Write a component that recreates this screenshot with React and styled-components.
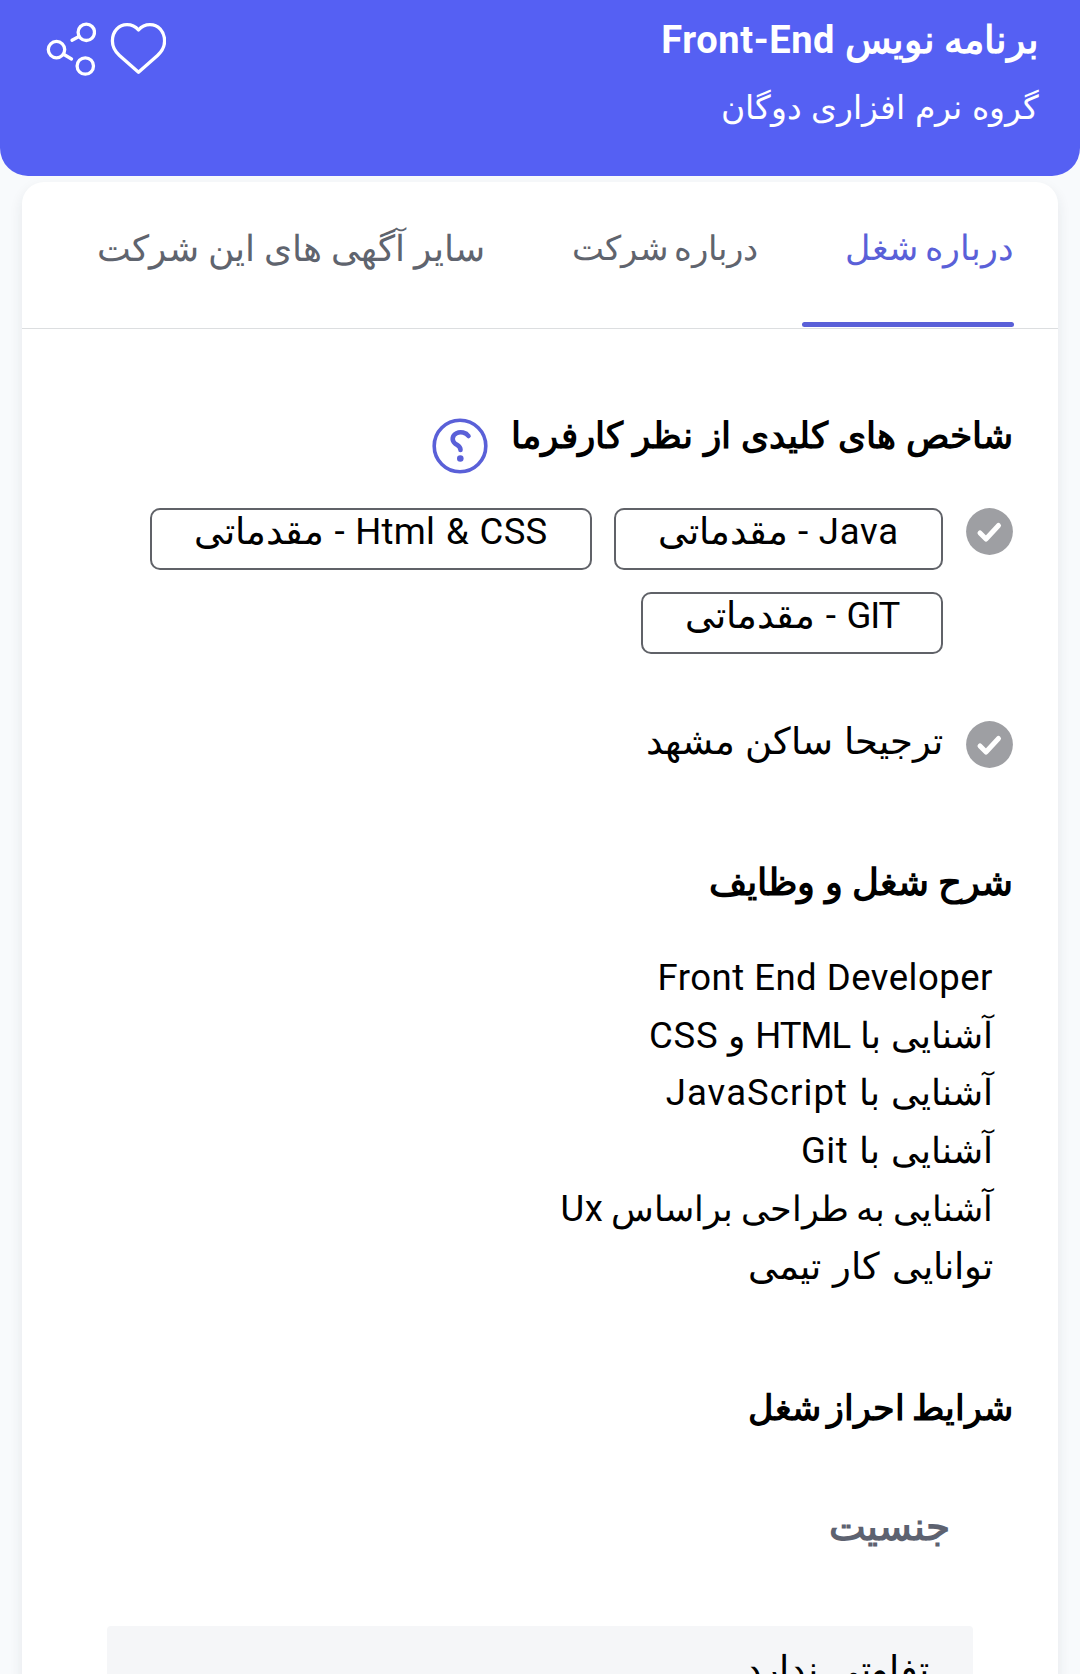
import styled, { createGlobalStyle } from "styled-components"

const GlobalStyle = createGlobalStyle`
  * {
    box-sizing: border-box;
    margin: 0;
    padding: 0;
  }
  body {
    background-color: #f8fafc;
    color: #000;
    font-family: Roboto, sans-serif;
    overflow: hidden;
  }
`

const Page = styled.main`
  direction: rtl;
  width: 1080px;
  height: 1674px;
  overflow: hidden;
`

const Header = styled.header`
  display: flex;
  justify-content: space-between;
  height: 176px;
  padding: 10px 41px 0 46px;
  border-radius: 0 0 28px 28px;
  background-color: #5560f3;
  color: #fff;
`

const HeaderTitles = styled.div`
  display: flex;
  flex-direction: column;
  gap: 8px;
`

const JobTitle = styled.h1`
  font-size: 38px;
  font-weight: 700;
  line-height: 60px;
`

const CompanyName = styled.p`
  font-size: 33px;
  line-height: 60px;
  word-spacing: 1.6px;
`

const HeaderActions = styled.div`
  display: flex;
  gap: 14px;
  padding-top: 11px;
`

const Card = styled.section`
  width: 1036px;
  height: 1600px;
  margin: 6px auto 0;
  border-radius: 22px;
  background-color: #fff;
  box-shadow: 0 6px 14px rgba(30, 40, 60, 0.09);
`

const Tabs = styled.nav`
  display: flex;
  gap: 44px;
  height: 147px;
  padding: 37px 44px 0 0;
  border-bottom: 1px solid #dcdee0;
`

const Tab = styled.a`
  display: flex;
  flex-direction: column;
  justify-content: space-between;
  padding-bottom: 1px;
  color: ${(props) => (props.$active ? "#5a60d8" : "#5f646e")};
  white-space: nowrap;
`

const TabLabel = styled.span`
  padding-left: ${(props) => (props.$space ? 43 : 41)}px;
  font-size: ${(props) => props.$size}px;
  line-height: 60px;
  word-spacing: ${(props) => props.$space || 0}px;
`

const TabIndicator = styled.span`
  height: 5px;
  border-radius: 3px;
  background-color: #5a60d8;
`

const Body = styled.div`
  display: flex;
  flex-direction: column;
  padding: 77px 45px 0 85px;
`

const HeadingRow = styled.div`
  display: flex;
  align-items: flex-start;
  gap: 23px;
  height: 68px;
`

const Heading = styled.h2`
  margin-top: ${(props) => props.$top || 0}px;
  font-size: ${(props) => props.$size}px;
  font-weight: 700;
  line-height: 60px;
  word-spacing: ${(props) => props.$space || 0}px;
`

const HelpButton = styled.span`
  display: flex;
  margin-top: 12px;
`

const Criteria = styled.ul`
  display: flex;
  flex-direction: column;
  gap: 67px;
  margin-top: 34px;
  list-style: none;
`

const Criterion = styled.li`
  display: flex;
  align-items: flex-start;
  gap: 23px;
  min-height: 47px;

  > svg {
    flex-shrink: 0;
  }
`

const CriterionText = styled.p`
  font-size: 37px;
  line-height: 41px;
  word-spacing: 1.5px;
`

const Chips = styled.div`
  display: flex;
  flex-wrap: wrap;
  gap: 22px;
`

const Chip = styled.span`
  height: 62px;
  padding: 0 42px;
  border: 2px solid #606268;
  border-radius: 10px;
  font-size: 37px;
  line-height: 43px;
  white-space: nowrap;
  word-spacing: 1.3px;
`

const Duties = styled.ul`
  margin-top: 37px;
  padding-right: 20px;
  list-style: none;
`

const Duty = styled.li`
  height: 57.7px;
  font-size: ${(props) => props.$size}px;
  line-height: 57.7px;
  word-spacing: ${(props) => props.$space || 0}px;
`

const Latin = styled.span`
  font-size: ${(props) => props.$size || 36.5}px;
  line-height: 1;
  letter-spacing: ${(props) => props.$tracking ?? 0.8}px;
`

const FieldLabel = styled.h3`
  margin-top: 59px;
  padding-right: 63px;
  color: #5d6270;
  font-size: 38.6px;
  font-weight: 700;
  line-height: 60px;
`

const FieldValue = styled.div`
  height: 120px;
  margin: 69px 40px 0 0;
  padding: 14px 44px 0;
  border-radius: 4px;
  background-color: #f5f6f8;
  font-size: 37px;
  line-height: 60px;
  word-spacing: 3px;
`

function HeartIcon() {
  return (
    <svg width="56" height="56" viewBox="110 21 56 56" fill="none" stroke="#fff" strokeWidth="3.3" strokeLinejoin="round">
      <path d="M138.5 72.3 L119.5 55.5 C114 50.5 112.4 46 112.4 41 C112.4 31 119 24.7 127 24.7 C131.5 24.7 135.5 26.5 138.5 30 C141.5 26.5 145.5 24.7 150 24.7 C158 24.7 164.6 31 164.6 41 C164.6 46 163 50.5 157.5 55.5 Z" />
    </svg>
  )
}

function ShareIcon() {
  return (
    <svg width="50" height="56" viewBox="46 21 50 56" fill="none" stroke="#fff" strokeWidth="3.3" strokeLinecap="round">
      <circle cx="86.3" cy="32.3" r="8.2" />
      <circle cx="56.5" cy="49.6" r="8.2" />
      <circle cx="85.3" cy="66" r="8.2" />
      <path d="M79 36.5 L72 40.3 M64 54.5 L71.5 59" />
    </svg>
  )
}

function HelpIcon() {
  return (
    <svg width="56" height="56" viewBox="0 0 56 56" fill="none" stroke="#5a60d8" strokeLinecap="round">
      <circle cx="28" cy="28" r="25.8" strokeWidth="3.6" />
      <path d="M36.5 18 C34 14.5 28.5 13.2 24.5 15.2 C20 17.5 19.5 22.5 23 25.5 C25.5 27.5 28.5 28 28.5 32" strokeWidth="4.6" />
      <circle cx="28.3" cy="40.5" r="3.3" fill="#5a60d8" stroke="none" />
    </svg>
  )
}

function CheckIcon() {
  return (
    <svg width="47" height="47" viewBox="0 0 47 47" fill="none">
      <circle cx="23.5" cy="23.5" r="23.4" fill="#9e9fa3" />
      <path d="M14 25 L20 31 L32.5 17.5" stroke="#fff" strokeWidth="5" strokeLinecap="round" strokeLinejoin="round" />
    </svg>
  )
}

function App() {
  return (
    <>
      <GlobalStyle />
      <Page>
        <Header>
          <HeaderTitles>
            <JobTitle>
              برنامه نویس <Latin $size={38} $tracking={0.6}>Front-End</Latin>
            </JobTitle>
            <CompanyName>گروه نرم افزاری دوگان</CompanyName>
          </HeaderTitles>
          <HeaderActions>
            <HeartIcon />
            <ShareIcon />
          </HeaderActions>
        </Header>

        <Card>
          <Tabs>
            <Tab $active>
              <TabLabel $size={35} $space={-2}>درباره شغل</TabLabel>
              <TabIndicator />
            </Tab>
            <Tab>
              <TabLabel $size={33.5} $space={-2}>درباره شرکت</TabLabel>
            </Tab>
            <Tab>
              <TabLabel $size={36}>سایر آگهی های این شرکت</TabLabel>
            </Tab>
          </Tabs>

          <Body>
            <HeadingRow>
              <Heading $size={36} $space={1.2}>شاخص های کلیدی از نظر کارفرما</Heading>
              <HelpButton>
                <HelpIcon />
              </HelpButton>
            </HeadingRow>

            <Criteria>
              <Criterion>
                <CheckIcon />
                <Chips>
                  <Chip><Latin>Java</Latin> - مقدماتی</Chip>
                  <Chip><Latin $tracking={0.3}>Html &amp; CSS</Latin> - مقدماتی</Chip>
                  <Chip><Latin $tracking={-1.2}>GIT</Latin> - مقدماتی</Chip>
                </Chips>
              </Criterion>
              <Criterion>
                <CheckIcon />
                <CriterionText>ترجیحا ساکن مشهد</CriterionText>
              </Criterion>
            </Criteria>

            <Heading $size={37} $top={85}>شرح شغل و وظایف</Heading>
            <Duties>
              <Duty $size={36}><Latin $tracking={0.5}>Front End Developer</Latin></Duty>
              <Duty $size={36} $space={1}>آشنایی با <Latin $tracking={-1}>HTML</Latin> و <Latin>CSS</Latin></Duty>
              <Duty $size={36} $space={2}>آشنایی با <Latin $tracking={1.1}>JavaScript</Latin></Duty>
              <Duty $size={36} $space={2}>آشنایی با <Latin $tracking={0.5}>Git</Latin></Duty>
              <Duty $size={34.5} $space={-1}>آشنایی به طراحی براساس <Latin>Ux</Latin></Duty>
              <Duty $size={37.4} $space={2.5}>توانایی کار تیمی</Duty>
            </Duties>

            <Heading $size={34.7} $top={82} $space={-2}>شرایط احراز شغل</Heading>
            <FieldLabel>جنسیت</FieldLabel>
            <FieldValue>تفاوتی ندارد</FieldValue>
          </Body>
        </Card>
      </Page>
    </>
  )
}

export default App
